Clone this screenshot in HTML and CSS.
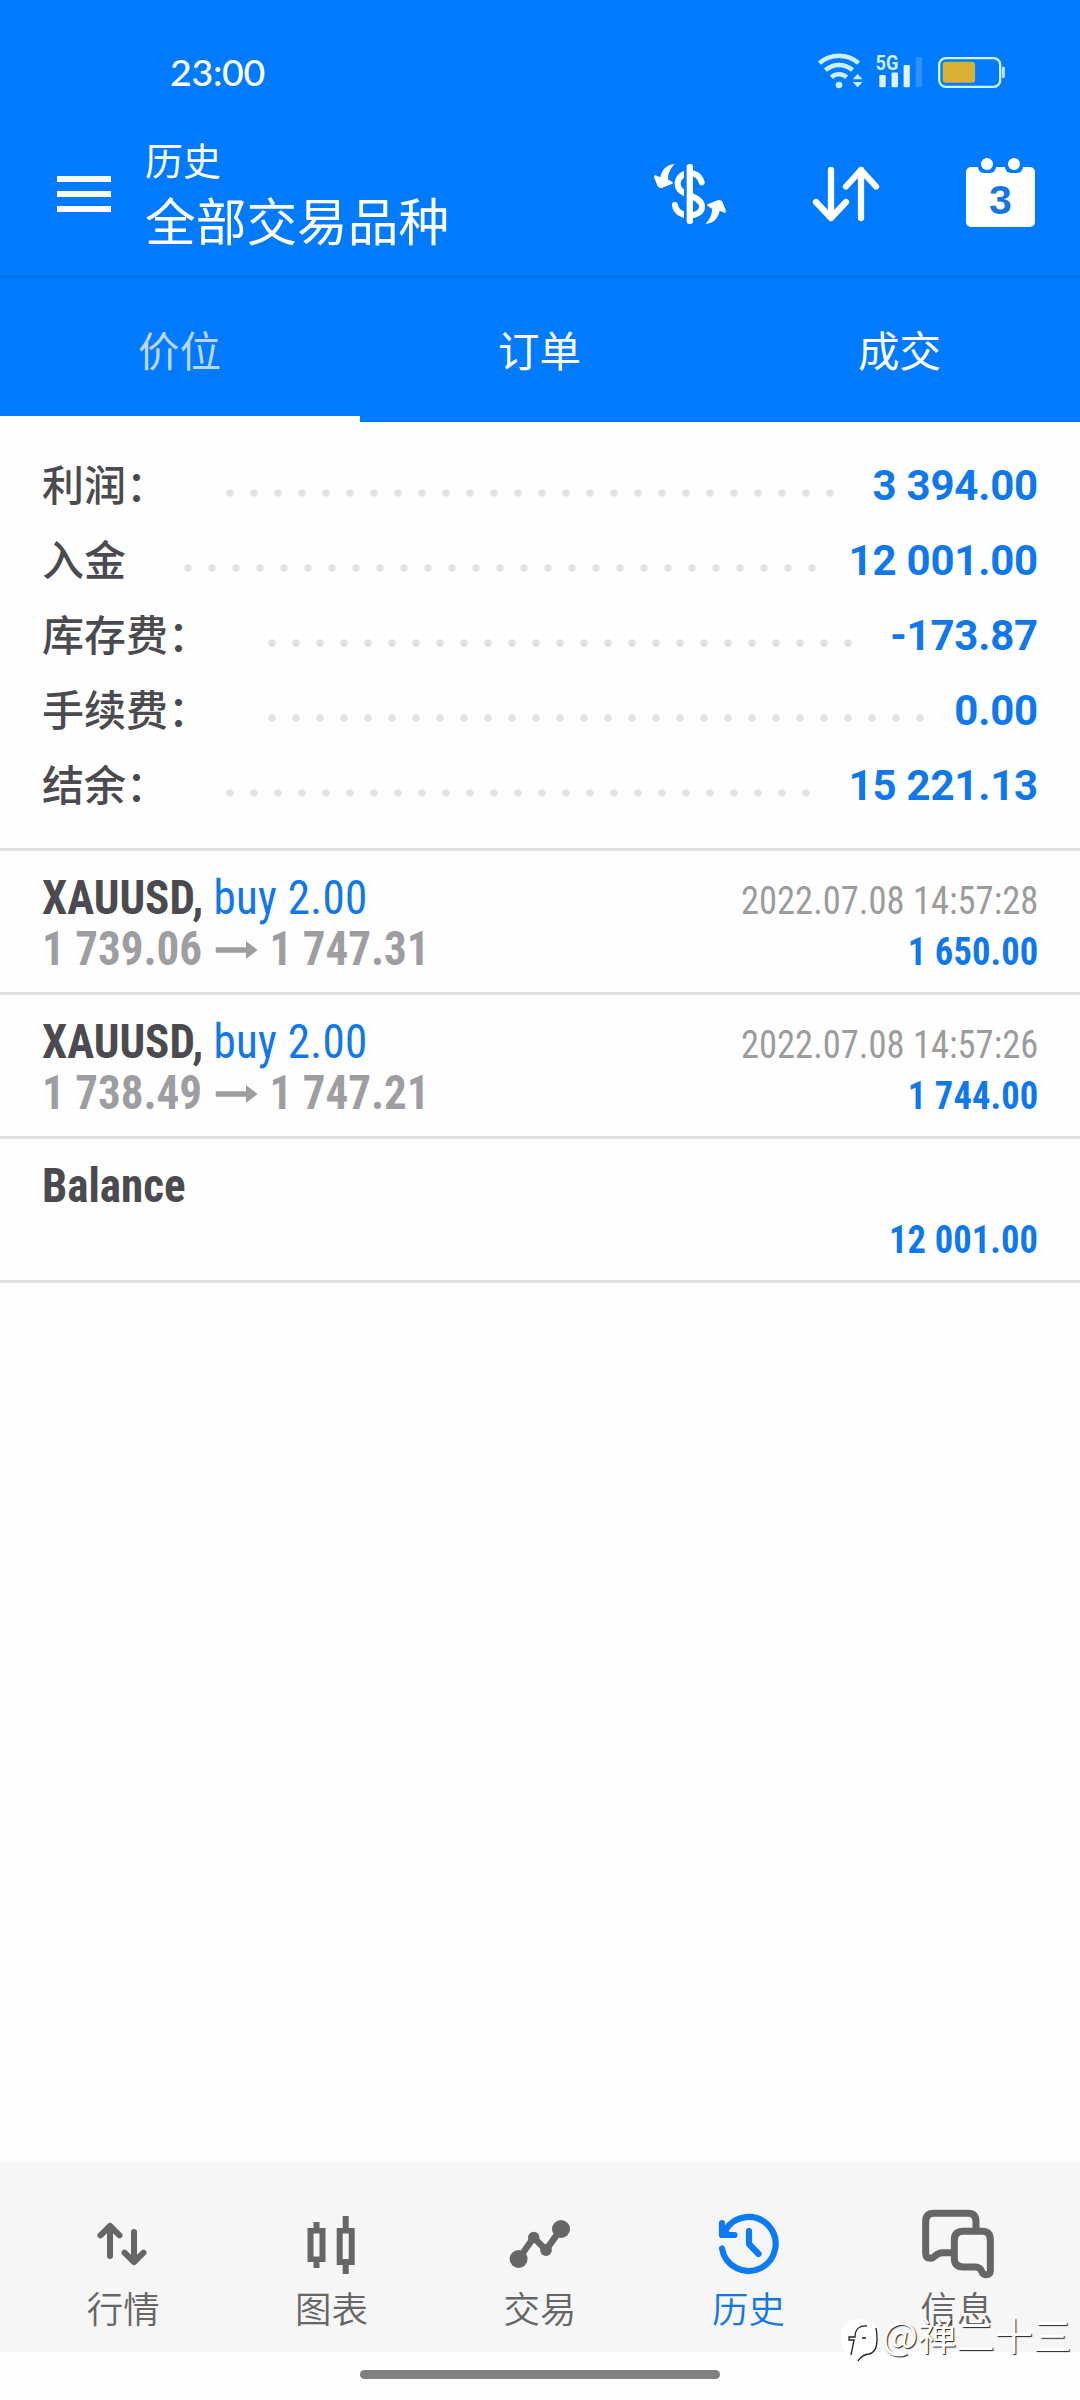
FILE: index.html
```html
<!DOCTYPE html>
<html lang="zh-CN">
<head>
<meta charset="utf-8">
<title>历史</title>
<link rel="stylesheet" href="styles.css">
</head>
<body>
<div class="screen">
  <header class="header">
    <div class="status">
      <span class="clock">23:00</span>
      <svg class="status-icons" width="190" height="40" viewBox="816 50 190 40">
        <g fill="none" stroke="#cdefff" stroke-width="4.500">
          <path d="M819.4 63.2A29.3 29.3 0 0 1 858.6 63.2"/>
          <path d="M825.4 70.2A20.2 20.2 0 0 1 852.6 70.2"/>
          <path d="M831.4 77.3A11 11 0 0 1 846.6 77.3"/>
        </g>
        <circle cx="839" cy="85" r="3.3" fill="#cdefff"/>
        <path d="M852.8 79.3L857.6 73.700L862.4 79.3ZM852.8 82L857.6 87.5L862.4 82Z" fill="#cdefff"/>
        <text class="net" x="875.5" y="70" textLength="23" lengthAdjust="spacingAndGlyphs">5G</text>
        <g fill="#dff2ff">
          <rect x="879.3" y="75" width="6.4" height="12.3" rx="1"/>
          <rect x="891.6" y="72.4" width="6.4" height="14.9" rx="1"/>
          <rect x="903.6" y="65" width="6.2" height="22.3" rx="1"/>
          <rect x="915.7" y="57" width="6.4" height="30.3" rx="1" opacity=".2"/>
        </g>
        <rect x="939.2" y="58.2" width="61" height="28.6" rx="6.5" fill="none" stroke="#cdf5ff" stroke-width="2.3"/>
        <rect x="942.7" y="61.7" width="32.4" height="21" rx="3" fill="#d8b033"/>
        <rect x="1002" y="66.7" width="2.9" height="11.3" rx="1" fill="#bfe6ff"/>
      </svg>
    </div>
    <div class="toolbar">
      <svg class="menu" width="54" height="36" viewBox="0 0 54 36" fill="#fff"><path d="M0 0h54v6H0zM0 15h54v6H0zM0 30h54v6H0z"/></svg>
      <div class="titles">
        <div class="subtitle">历史</div>
        <div class="title">全部交易品种</div>
      </div>
      <svg class="actions" width="384" height="70" viewBox="652 158 384 70">
        <g transform="translate(645 150) scale(.33333)">
          <path d="M170 97C165 78 150 69 134 69C112 69 98 84 98 101C98 122 115 128 134 136C155 144 171 152 171 170C171 188 152 196 134 196C112 196 93 187 90 165" fill="none" stroke="#fff" stroke-width="18" stroke-linecap="round"/>
          <path d="M117 36H130V228H117Z" fill="#007aff"/>
          <rect x="125" y="42" width="19" height="180" rx="8" fill="#fff"/>
          <path id="swap" d="M89 42C64 44 50 60 46 82L30 75Q26 77 28 84L38 109Q41 115 50 114L82 101Q86 98 82 96L69 88C68 72 76 56 89 42Z" fill="#fff"/>
          <use href="#swap" transform="rotate(180 135 132)"/>
        </g>
        <g fill="none" stroke="#fff" stroke-width="6.3" stroke-linecap="round" stroke-linejoin="round">
          <path d="M831 170V218M816 202L831 218L846 202M861 218V170M846 186.500L861 170L876 186.500"/>
        </g>
        <rect x="966" y="167" width="69" height="60" rx="5" fill="#fff"/>
        <g fill="#007aff"><rect x="978" y="158" width="18" height="15" rx="6"/><rect x="1005" y="158" width="18" height="15" rx="6"/></g>
        <circle cx="987" cy="164" r="6" fill="#fff"/><circle cx="1014" cy="164" r="6" fill="#fff"/>
        <text class="day" x="1000.500" y="214" text-anchor="middle">3</text>
      </svg>
    </div>
    <nav class="tabs">
      <div class="tab tab-on">价位</div>
      <div class="tab">订单</div>
      <div class="tab">成交</div>
    </nav>
  </header>

  <section class="summary">
    <div class="sum"><span class="label">利润：</span><i class="dots"></i><b class="value">3 394.00</b></div>
    <div class="sum"><span class="label">入金</span><i class="dots"></i><b class="value">12 001.00</b></div>
    <div class="sum"><span class="label">库存费：</span><i class="dots"></i><b class="value">-173.87</b></div>
    <div class="sum"><span class="label">手续费：</span><i class="dots"></i><b class="value">0.00</b></div>
    <div class="sum"><span class="label">结余：</span><i class="dots"></i><b class="value">15 221.13</b></div>
  </section>

  <section class="deals">
    <article class="deal">
      <div class="line"><span class="symbol">XAUUSD, <span class="side">buy 2.00</span></span><span class="time">2022.07.08 14:57:28</span></div>
      <div class="line"><span class="prices">1 739.06<svg class="arrow" width="45" height="18" viewBox="0 0 43 18" preserveAspectRatio="none"><path d="M0 6.300H31V0L43 9L31 18V11.700H0Z" fill="#9e9e9e"/></svg>1 747.31</span><span class="profit">1 650.00</span></div>
    </article>
    <article class="deal">
      <div class="line"><span class="symbol">XAUUSD, <span class="side">buy 2.00</span></span><span class="time">2022.07.08 14:57:26</span></div>
      <div class="line"><span class="prices">1 738.49<svg class="arrow" width="45" height="18" viewBox="0 0 43 18" preserveAspectRatio="none"><path d="M0 6.300H31V0L43 9L31 18V11.700H0Z" fill="#9e9e9e"/></svg>1 747.21</span><span class="profit">1 744.00</span></div>
    </article>
    <article class="deal">
      <div class="line"><span class="symbol">Balance</span></div>
      <div class="line line-end"><span class="profit">12 001.00</span></div>
    </article>
  </section>

  <nav class="bottom">
    <div class="item">
      <svg width="80" height="72" viewBox="83 2208 80 72" fill="none" stroke="#666" stroke-width="6" stroke-linecap="round" stroke-linejoin="round"><path d="M110 2256V2226M100.500 2235.300L110 2226L119.500 2235.300M134 2232V2262M124.500 2252.700L134 2262L143.500 2252.700"/></svg>
      <span>行情</span>
    </div>
    <div class="item">
      <svg width="80" height="72" viewBox="292 2208 80 72" fill="#666" fill-rule="evenodd"><path d="M313.500 2222h6v6h6v34h-6v6h-6v-6h-6v-34h6zM313.500 2233.500v23h6v-23zM342.700 2216h6v12h6v37h-6v9h-6v-9h-6v-37h6zM342.700 2233.500v25.500h6v-25.500z"/></svg>
      <span>图表</span>
    </div>
    <div class="item">
      <svg width="80" height="72" viewBox="500 2208 80 72" fill="#666"><path d="M518.600 2259L533.700 2237.500L546 2250L561 2229" fill="none" stroke="#666" stroke-width="6.500"/><circle cx="518.600" cy="2259" r="9"/><circle cx="533.700" cy="2237.500" r="5.700"/><circle cx="546" cy="2250" r="5.900"/><circle cx="561" cy="2229" r="9"/></svg>
      <span>交易</span>
    </div>
    <div class="item item-on">
      <svg width="80" height="72" viewBox="708 2208 80 72" fill="none" stroke="#0a7af5" stroke-width="6.200" stroke-linecap="round" stroke-linejoin="round"><path d="M722 2248.500A27 27 0 1 0 725.500 2230"/><path d="M722 2223V2235H734.500M749 2231V2244L758.500 2254"/><path d="M722 2225L733 2235H722Z" fill="#0a7af5" stroke="none"/></svg>
      <span>历史</span>
    </div>
    <div class="item">
      <svg width="80" height="72" viewBox="917 2208 80 72"><g transform="translate(830 2200) scale(.33333)" fill="none" stroke="#666" stroke-width="21"><path d="M438 88V66Q438 40 414 40H312Q287 40 287 66V160Q287 175 302 175Q309 174 316 167Q326 158 338 158H368"/><path d="M400 94H456Q481 94 481 120V212Q481 224 467 224Q458 224 455 214Q450 201 437 201H400Q373 201 373 175V120Q373 94 400 94Z"/></g></svg>
      <span>信息</span>
    </div>
  </nav>
  <div class="gesture"><div class="pill"></div></div>

  <div class="watermark">
    <svg width="40" height="46" viewBox="0 0 40 46"><path d="M19 1C31 1 37 6 37 18C37 32 34 35 29 36L18 43L19 38C7 38 1 33 1 20C1 7 8 1 19 1Z" fill="#fff"/><path d="M11 37L14 22H9V19H15C15 11 20 7 27 8M22 20H26M36 10C38 22 38 34 29 36Q23 36 18 43" fill="none" stroke="#222" stroke-width="1.300"/></svg>
    <span>@禅二十三</span>
  </div>
</div>
</body>
</html>
```
FILE: styles.css
```css
* { box-sizing: border-box; }
body { margin: 0; background: #fff; }
.screen {
  position: relative;
  display: flex;
  flex-direction: column;
  width: 1080px;
  height: 2400px;
  overflow: hidden;
  background: #fefefe;
  font-family: Roboto, "Noto Sans CJK SC", sans-serif;
}
.header { height: 422px; background: #007aff; color: #fff; }
.status {
  display: flex;
  justify-content: space-between;
  height: 120px;
  padding: 50px 74px 0 170px;
}
.clock { font: 500 37.5px/44px Lato, sans-serif; letter-spacing: -0.3px; }
.net { font: 700 21px Roboto, sans-serif; fill: #cdefff; }
.toolbar {
  display: flex;
  align-items: flex-start;
  height: 158px;
  padding: 0 44px 0 57px;
  border-bottom: 3px solid #006fe8;
}
.menu { margin-top: 56px; }
.titles {
  flex: 1;
  padding: 19px 0 0 34px;
  font-family: "Noto Sans CJK SC", sans-serif;
  font-weight: 400;
  white-space: nowrap;
}
.subtitle { font-size: 38px; line-height: 40px; }
.title { font-size: 50.7px; line-height: 60px; margin-top: 10px; }
.actions { margin-top: 38px; }
.day { font: 700 41px "Liberation Sans", sans-serif; fill: #1477e4; }
.tabs { display: grid; grid-template-columns: repeat(3, 1fr); height: 144px; }
.tab {
  padding: 41px 1px 0 0;
  border-bottom: 6px solid transparent;
  text-align: center;
  font: 400 41.5px/60px "Noto Sans CJK SC", sans-serif;
}
.tab-on { color: #bdd6f8; border-bottom-color: #fff; }

.summary { height: 426px; padding: 26px 42px 0; }
.sum { display: flex; align-items: center; height: 75px; }
.label { padding-bottom: 6px; font: 500 42px/60px "Noto Sans CJK SC", sans-serif; color: #4b4b4f; }
.dots {
  flex: 1;
  height: 8px;
  margin: 15px 28px 0 50px;
  background: radial-gradient(circle at center, #e2e2e2 3.2px, transparent 4.2px) 0 0 / 24px 8px repeat-x;
}
.value { font-size: 42px; line-height: 60px; font-weight: 700; letter-spacing: -0.2px; color: #0f78ec; }

.deals { font-family: "Roboto Condensed", Roboto, sans-serif; font-stretch: 75%; }
.deal { height: 144px; padding: 21px 42px 0; border-top: 3px solid #e1e1e1; }
.deal:last-child { height: 147px; border-bottom: 3px solid #e1e1e1; }
.line {
  display: flex;
  align-items: baseline;
  justify-content: space-between;
  height: 51px;
  line-height: 51px;
  white-space: nowrap;
}
.line-end { justify-content: flex-end; line-height: 58px; }
.symbol, .prices { font-size: 48px; font-weight: 700; transform: scaleX(.938); transform-origin: left; }
.time, .profit { font-size: 39px; transform: scaleX(.937); transform-origin: right; }
.symbol { color: #4b4b4f; }
.side { font-weight: 400; letter-spacing: 0.3px; color: #1277ea; }
.time { color: #9c9c9c; }
.prices { color: #9e9ea2; }
.arrow { margin: 0 13px 0 14px; vertical-align: 6px; }
.profit { font-weight: 700; letter-spacing: 0.1px; color: #0f78ec; }

.bottom {
  display: grid;
  grid-template-columns: repeat(5, 1fr);
  height: 189px;
  margin-top: auto;
  padding: 45px 19px 0;
  background: #f6f6f7;
  box-shadow: 0 -2px 5px rgba(0, 0, 0, .03);
}
.item {
  display: flex;
  flex-direction: column;
  align-items: center;
  gap: 3px;
  color: #666;
  font: 350 36.5px/50px "Noto Sans CJK SC", sans-serif;
}
.item-on { color: #1477e4; }
.gesture { display: flex; justify-content: center; height: 48px; padding-top: 18px; }
.pill { width: 360px; height: 9px; border-radius: 5px; background: #808080; }
.watermark {
  position: absolute;
  left: 840px;
  top: 2318px;
  display: flex;
  gap: 2px;
  color: #fff;
  font: 400 38px/32px "Noto Sans CJK SC", sans-serif;
  letter-spacing: 0.3px;
  text-shadow: 1px 1px 1px #222;
  white-space: nowrap;
}
```
